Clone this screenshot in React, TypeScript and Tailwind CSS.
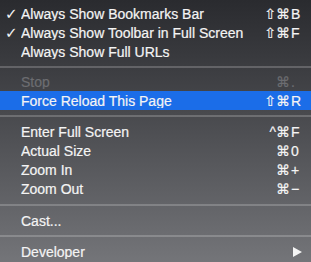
import React from "react";

type Item = {
  label: string;
  mods?: string;
  keyChar?: string;
  checked?: boolean;
  disabled?: boolean;
  active?: boolean;
  submenu?: boolean;
};

const groups: Item[][] = [
  [
    { label: "Always Show Bookmarks Bar", mods: "⇧⌘", keyChar: "B", checked: true },
    { label: "Always Show Toolbar in Full Screen", mods: "⇧⌘", keyChar: "F", checked: true },
    { label: "Always Show Full URLs" },
  ],
  [
    { label: "Stop", mods: "⌘", keyChar: ".", disabled: true },
    { label: "Force Reload This Page", mods: "⇧⌘", keyChar: "R", active: true },
  ],
  [
    { label: "Enter Full Screen", mods: "^⌘", keyChar: "F" },
    { label: "Actual Size", mods: "⌘", keyChar: "0" },
    { label: "Zoom In", mods: "⌘", keyChar: "+" },
    { label: "Zoom Out", mods: "⌘", keyChar: "−" },
  ],
  [{ label: "Cast..." }],
  [{ label: "Developer", submenu: true }],
];

// separator heights before groups 1..4
const sepHeights = ["h-[11px]", "h-[12px]", "h-[13px]", "h-[12px]"];

function Row({ item }: { item: Item }) {
  return (
    <div
      className={
        "flex h-[19px] items-center pr-[8px] " +
        (item.active ? "bg-[#1b6de8] " : "") +
        (item.disabled ? "text-[#6c6d71]" : "text-[#f4f4f4]")
      }
    >
      <span className="w-[21px] shrink-0 pl-[5px] text-[15px] font-bold leading-none">
        {item.checked ? "✓" : ""}
      </span>
      <span className="flex-1 truncate [-webkit-text-stroke:0.2px_currentColor]">{item.label}</span>
      {item.keyChar && (
        <span className="flex items-center [-webkit-text-stroke:0.2px_currentColor]">
          <span className="text-right">{item.mods}</span>
          <span className="w-[13px] pl-[1px]">{item.keyChar}</span>
        </span>
      )}
      {item.submenu && (
        <svg width="9" height="10" viewBox="0 0 9 10" className="mr-[1px]">
          <path d="M0 0 L9 5 L0 10 Z" fill="#f4f4f4" />
        </svg>
      )}
    </div>
  );
}

export default function App() {
  return (
    <div
      className="h-[262px] w-[311px] overflow-hidden bg-gradient-to-b from-[#2a2b2f] to-[#747579] pt-[4px] text-[14px] leading-none"
      style={{ fontFamily: '"Liberation Sans", "DejaVu Sans", sans-serif' }}
    >
      {groups.map((g, i) => (
        <div key={i}>
          {i > 0 && (
            <div className={"flex items-center " + sepHeights[i - 1]}>
              <div className="h-[2px] w-full bg-white/20" />
            </div>
          )}
          {g.map((item) => (
            <Row key={item.label} item={item} />
          ))}
        </div>
      ))}
    </div>
  );
}
